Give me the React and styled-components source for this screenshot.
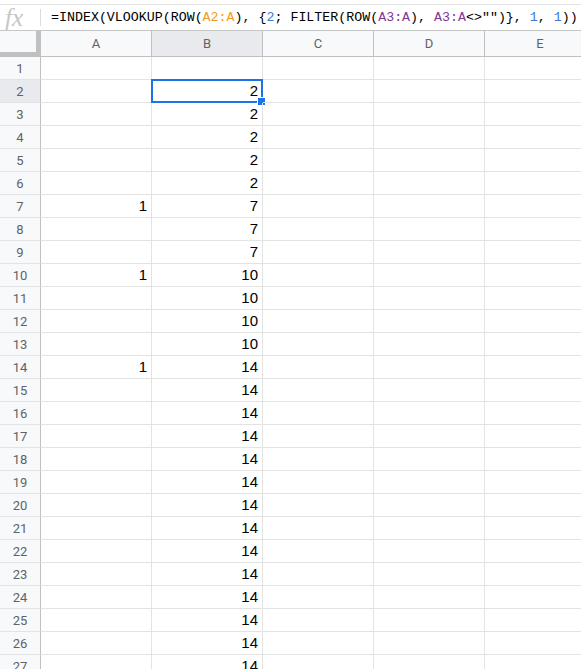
import React from 'react';
import styled, { createGlobalStyle } from 'styled-components';

const GlobalStyle = createGlobalStyle`
  html, body {
    margin: 0;
    padding: 0;
    background: #ffffff;
    overflow: hidden;
  }
`;

const columns = ['A', 'B', 'C', 'D', 'E'];

const aValues = { 7: 1, 10: 1, 14: 1 };

const bValue = (row) => {
  if (row < 2) return '';
  if (row < 7) return 2;
  if (row < 10) return 7;
  if (row < 14) return 10;
  return 14;
};

const rows = Array.from({ length: 28 }, (_, i) => i + 1);

const formula = [
  ['=INDEX(VLOOKUP(ROW(', 'plain'],
  ['A2:A', 'orange'],
  ['), {', 'plain'],
  ['2', 'blue'],
  ['; FILTER(ROW(', 'plain'],
  ['A3:A', 'purple'],
  ['), ', 'plain'],
  ['A3:A', 'purple'],
  ['<>"")}, ', 'plain'],
  ['1', 'blue'],
  [', ', 'plain'],
  ['1', 'blue'],
  ['))', 'plain'],
];

const tokenColors = {
  plain: '#000000',
  orange: '#f7981d',
  blue: '#3c78d8',
  purple: '#7e3794',
};

const App = () => (
  <>
    <GlobalStyle />
    <Page>
      <FormulaBar>
        <FxIcon>fx</FxIcon>
        <Divider />
        <FormulaText>
          {formula.map(([text, kind], i) => (
            <Token key={i} $kind={kind}>
              {text}
            </Token>
          ))}
        </FormulaText>
      </FormulaBar>
      <Grid>
        <Corner />
        {columns.map((col) => (
          <ColumnHeader key={col} $active={col === 'B'}>
            {col}
          </ColumnHeader>
        ))}
        {rows.map((row) => (
          <React.Fragment key={row}>
            <RowHeader $active={row === 2}>{row}</RowHeader>
            <Cell>{aValues[row] || ''}</Cell>
            <Cell>
              {bValue(row)}
              {row === 2 && (
                <Selection>
                  <Handle />
                </Selection>
              )}
            </Cell>
            <Cell />
            <Cell />
            <Cell />
          </React.Fragment>
        ))}
      </Grid>
    </Page>
  </>
);

const Page = styled.div`
  width: 581px;
  height: 669px;
  overflow: hidden;
  background: #ffffff;
`;

const FormulaBar = styled.div`
  margin-top: 4px;
  height: 25px;
  border-top: 1px solid #e2e3e3;
  border-bottom: 1px solid #c4c7c5;
  display: flex;
  align-items: center;
`;

const FxIcon = styled.span`
  width: 40px;
  padding-left: 5px;
  box-sizing: border-box;
  font-family: 'Liberation Serif', serif;
  font-style: italic;
  font-size: 25px;
  color: #c4c7c5;
  line-height: 25px;
`;

const Divider = styled.div`
  width: 1px;
  height: 17px;
  background: #dadce0;
`;

const FormulaText = styled.div`
  padding-left: 10px;
  font-family: 'Liberation Mono', monospace;
  font-size: 13.3px;
  white-space: pre;
  line-height: 25px;
`;

const Token = styled.span`
  color: ${(p) => tokenColors[p.$kind]};
`;

const Grid = styled.div`
  display: grid;
  grid-template-columns: 41px repeat(5, 111px);
  grid-template-rows: 26px;
  grid-auto-rows: 23px;
`;

const Corner = styled.div`
  box-sizing: border-box;
  background: #f8f9fa;
  border-right: 5px solid #c0c0c0;
  border-bottom: 5px solid #c0c0c0;
`;

const ColumnHeader = styled.div`
  box-sizing: border-box;
  display: flex;
  align-items: center;
  justify-content: center;
  background: ${(p) => (p.$active ? '#e8eaed' : '#f8f9fa')};
  border-right: 1px solid #c0c0c0;
  border-bottom: 1px solid #c0c0c0;
  font-family: Roboto, 'Liberation Sans', sans-serif;
  font-size: 13px;
  color: #5f6368;
`;

const RowHeader = styled.div`
  box-sizing: border-box;
  display: flex;
  align-items: center;
  justify-content: center;
  background: ${(p) => (p.$active ? '#e8eaed' : '#f8f9fa')};
  border-right: 1px solid #c0c0c0;
  border-bottom: 1px solid #e2e3e3;
  font-family: Roboto, 'Liberation Sans', sans-serif;
  font-size: 13px;
  color: #5f6368;
`;

const Cell = styled.div`
  position: relative;
  box-sizing: border-box;
  display: flex;
  align-items: flex-end;
  justify-content: flex-end;
  padding: 0 4px 3px 0;
  border-right: 1px solid #e2e3e3;
  border-bottom: 1px solid #e2e3e3;
  font-family: 'Liberation Sans', Arial, sans-serif;
  font-size: 15px;
  line-height: 17px;
  color: #000000;
`;

const Selection = styled.div`
  position: absolute;
  left: -1px;
  top: -1px;
  right: -1px;
  bottom: -1px;
  border: 2px solid #1a73e8;
  pointer-events: none;
`;

const Handle = styled.div`
  position: absolute;
  right: -5px;
  bottom: -5px;
  width: 7px;
  height: 7px;
  background: #1a73e8;
  border: 1px solid #ffffff;
  box-sizing: content-box;
`;

export default App;
